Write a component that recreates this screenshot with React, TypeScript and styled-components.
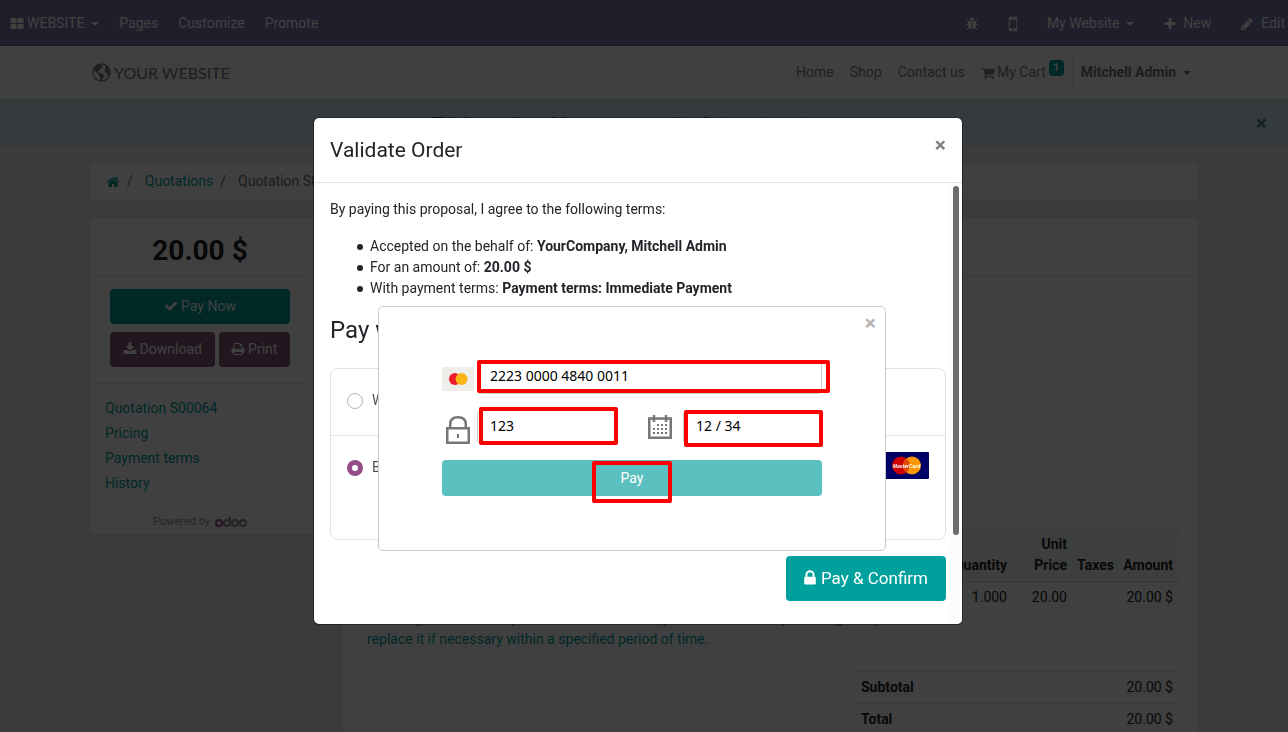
import React from "react";
import styled, { createGlobalStyle } from "styled-components";

const GlobalStyle = createGlobalStyle`
  *, *::before, *::after { box-sizing: border-box; }
  body {
    margin: 0;
    overflow: hidden;
    background: #ebebeb;
    color: #212529;
    font-family: Roboto, "Liberation Sans", sans-serif;
    font-size: 14px;
    line-height: 21px;
  }
  a { color: #00a09d; text-decoration: none; }
  h1, h2, h3, p { margin: 0; }
  button, input { font-family: inherit; }
`;

const paths = {
  apps: "M832 1024v384q0 52-38 90t-90 38h-512q-52 0-90-38t-38-90v-384q0-52 38-90t90-38h512q52 0 90 38t38 90zm0-768v384q0 52-38 90t-90 38h-512q-52 0-90-38t-38-90v-384q0-52 38-90t90-38h512q52 0 90 38t38 90zm896 768v384q0 52-38 90t-90 38h-512q-52 0-90-38t-38-90v-384q0-52 38-90t90-38h512q52 0 90 38t38 90zm0-768v384q0 52-38 90t-90 38h-512q-52 0-90-38t-38-90v-384q0-52 38-90t90-38h512q52 0 90 38t38 90z",
  bug: "M1696 960q0 26-19 45t-45 19h-224q0 171-67 290l208 209q19 19 19 45t-19 45q-18 19-45 19t-45-19l-198-197q-5 5-15 13t-42 28.5-65 36.5-82 29-97 13v-896h-128v896q-51 0-101.5-13.5t-87-33-66-39-43.5-32.5l-15-14-183 207q-20 21-48 21-24 0-43-16-19-18-20.5-44.5t15.5-46.5l202-227q-58-114-58-274h-224q-26 0-45-19t-19-45 19-45 45-19h224v-294l-173-173q-19-19-19-45t19-45 45-19 45 19l173 173h844l173-173q19-19 45-19t45 19 19 45-19 45l-173 173v294h224q26 0 45 19t19 45zm-480-576h-640q0-133 93.5-226.5t226.5-93.5 226.5 93.5 93.5 226.5z",
  mobile: "M976 1408q0-33-23.5-56.5t-56.5-23.5-56.5 23.5-23.5 56.5 23.5 56.5 56.5 23.5 56.5-23.5 23.5-56.5zm208-160v-704q0-13-9.5-22.5t-22.5-9.5h-512q-13 0-22.5 9.5t-9.5 22.5v704q0 13 9.5 22.5t22.5 9.5h512q13 0 22.5-9.5t9.5-22.5zm-192-848q0-16-16-16h-160q-16 0-16 16t16 16h160q16 0 16-16zm288-16v1024q0 52-38 90t-90 38h-512q-52 0-90-38t-38-90v-1024q0-52 38-90t90-38h512q52 0 90 38t38 90z",
  plus: "M1600 736v192q0 40-28 68t-68 28h-416v416q0 40-28 68t-68 28h-192q-40 0-68-28t-28-68v-416h-416q-40 0-68-28t-28-68v-192q0-40 28-68t68-28h416v-416q0-40 28-68t68-28h192q40 0 68 28t28 68v416h416q40 0 68 28t28 68z",
  pencil: "M491 1536l91-91-235-235-91 91v107h128v128h107zm523-928q0-22-22-22-10 0-17 7l-542 542q-7 7-7 17 0 22 22 22 10 0 17-7l542-542q7-7 7-17zm-54-192l416 416-832 832h-416v-416zm683 96q0 53-37 90l-166 166-416-416 166-165q36-38 90-38 53 0 91 38l235 234q37 39 37 91z",
  home: "M1472 992v480q0 26-19 45t-45 19h-384v-384h-256v384h-384q-26 0-45-19t-19-45v-480q0-1 .5-3t.5-3l575-474 575 474q1 2 1 6zm223-69l-62 74q-8 9-21 11h-3q-13 0-21-7l-692-577-692 577q-12 8-24 7-13-2-21-11l-62-74q-8-10-7-23.5t11-21.5l719-599q32-26 76-26t76 26l244 204v-195q0-14 9-23t23-9h192q14 0 23 9t9 23v408l219 182q10 8 11 21.5t-7 23.5z",
  lock: "M640 768h512v-192q0-106-75-181t-181-75-181 75-75 181v192zm832 96v576q0 40-28 68t-68 28h-960q-40 0-68-28t-28-68v-576q0-40 28-68t68-28h32v-192q0-184 132-316t316-132 316 132 132 316v192h32q40 0 68 28t28 68z",
  cart: "M704 1536q0 52-38 90t-90 38-90-38-38-90 38-90 90-38 90 38 38 90zm896 0q0 52-38 90t-90 38-90-38-38-90 38-90 90-38 90 38 38 90zm128-1088v512q0 24-16.5 42.5t-40.5 21.5l-1044 122q13 60 13 70 0 16-24 64h920q26 0 45 19t19 45-19 45-45 19h-1024q-26 0-45-19t-19-45q0-11 8-31.5t16-36 21.5-40 15.5-29.5l-177-823h-204q-26 0-45-19t-19-45 19-45 45-19h256q16 0 28.5 6.5t19.5 15.5 13 24.5 8 26 5.5 29.5 4.5 26h1201q26 0 45 19t19 45z",
  check: "M1671 566q0 40-28 68l-724 724-136 136q-28 28-68 28t-68-28l-136-136-362-362q-28-28-28-68t28-68l136-136q28-28 68-28t68 28l294 295 656-657q28-28 68-28t68 28l136 136q28 28 28 68z",
  download: "M1344 1344q0-26-19-45t-45-19-45 19-19 45 19 45 45 19 45-19 19-45zm256 0q0-26-19-45t-45-19-45 19-19 45 19 45 45 19 45-19 19-45zm128-224v320q0 40-28 68t-68 28h-1472q-40 0-68-28t-28-68v-320q0-40 28-68t68-28h465l135 136q58 56 136 56t136-56l136-136h464q40 0 68 28t28 68zm-325-569q17 41-14 70l-448 448q-18 19-45 19t-45-19l-448-448q-31-29-14-70 17-39 59-39h256v-448q0-26 19-45t45-19h256q26 0 45 19t19 45v448h256q42 0 59 39z",
  print: "M448 1536h896v-256h-896v256zm0-640h896v-384h-160q-40 0-68-28t-28-68v-160h-640v640zm1152 64q0-26-19-45t-45-19-45 19-19 45 19 45 45 19 45-19 19-45zm128 0v416q0 13-9.5 22.5t-22.5 9.5h-224v160q0 40-28 68t-68 28h-960q-40 0-68-28t-28-68v-160h-224q-13 0-22.5-9.5t-9.5-22.5v-416q0-79 56.5-135.5t135.5-56.5h64v-544q0-40 28-68t68-28h672q40 0 88 20t76 48l152 152q28 28 48 76t20 88v256h64q79 0 135.5 56.5t56.5 135.5z",
};

function Icon({ name, size = 14, width = size }: { name: keyof typeof paths; size?: number; width?: number }) {
  const inset = ((size - width) / size) * 896;
  return (
    <svg width={width} height={size} viewBox={`${inset} 0 ${1792 - 2 * inset} 1792`} fill="currentColor" aria-hidden="true">
      <path d={paths[name]} />
    </svg>
  );
}

const Caret = styled.span`
  border: 4px solid transparent;
  border-top-color: currentColor;
  border-bottom: 0;
  margin-left: 7px;
`;

/* ---------- top bars ---------- */

const Navbar = styled.nav`
  height: 46px;
  display: flex;
  justify-content: space-between;
  background: #7c7bad;
  border-bottom: 1px solid #5f5e97;
  padding: 2px 3px 0 10px;
`;

const NavGroup = styled.div<{ $gap: number }>`
  display: flex;
  align-items: center;
  gap: ${(p) => p.$gap}px;
`;

const NavLink = styled.a<{ $gap?: number }>`
  display: flex;
  align-items: center;
  color: #fff;
  svg { margin-right: ${(p) => p.$gap ?? 0}px; }
`;

const Container = styled.div`
  max-width: 1140px;
  margin: 0 auto;
  padding: 0 16px;
`;

const SiteHeader = styled.header`
  background: #fff;
`;

const SiteHeaderRow = styled(Container)`
  height: 53px;
  display: flex;
  align-items: center;
  justify-content: space-between;
  padding-right: 15px;
`;

const Logo = styled.a`
  height: 36px;
  padding: 0 2px;
  display: flex;
  align-items: center;
  gap: 3px;
  color: #777;
  font-family: Lato, sans-serif;
  font-size: 16px;
  background: repeating-linear-gradient(135deg, #fff 0 6px, #f4f4f4 6px 7px);
`;

const Menu = styled.div`
  display: flex;
  align-items: center;
`;

const MenuLink = styled.a<{ $strong?: boolean }>`
  display: flex;
  align-items: center;
  padding: 0 8px;
  color: ${(p) => (p.$strong ? "#777" : "#808080")};
  font-weight: ${(p) => (p.$strong ? 700 : 400)};
  svg { margin-right: 2px; }
`;

const Badge = styled.sup`
  align-self: flex-start;
  min-width: 15px;
  height: 16px;
  margin: -2px 0 0 3px;
  border-radius: 4px;
  background: #00a09d;
  color: #fff;
  font-size: 11px;
  line-height: 16px;
  font-weight: 700;
  text-align: center;
`;

const Divider = styled.span`
  width: 1px;
  height: 36px;
  background: #e4e4e4;
`;

const Alert = styled.div`
  height: 47px;
  display: flex;
  align-items: center;
  border: 1px solid #bee5eb;
  background: #d1ecf1;
  color: #0c5460;
  padding: 2px 20px 0;
`;

const AlertText = styled.p`
  flex: 1;
  padding-right: 30px;
  text-align: center;
`;

const Close = styled.button<{ $color: string }>`
  border: 0;
  padding: 0;
  background: none;
  color: ${(p) => p.$color};
  font-size: 21px;
  font-weight: 700;
  line-height: 21px;
`;

/* ---------- order page ---------- */

const Page = styled(Container)`
  padding-top: 17px;
`;

const Panel = styled.section`
  background: #fff;
  border: 1px solid #fafafa;
  border-radius: 4px;
`;

const Breadcrumb = styled(Panel)`
  height: 37px;
  display: flex;
  align-items: center;
  padding: 0 15px;
  color: #6c757d;
  a { display: flex; align-items: center; }
`;

const Slash = styled.span`
  padding: 0 12px 0 7px;
`;

const Columns = styled.div`
  display: flex;
  align-items: flex-start;
  gap: 12px;
  margin-top: 18px;
`;

const Sidebar = styled(Panel)`
  width: 240px;
  flex: none;
  padding-right: 20px;
`;

const Price = styled.h2`
  height: 58px;
  padding-top: 15px;
  border-bottom: 1px solid #dee2e6;
  font-size: 28px;
  line-height: 34px;
  text-align: center;
`;

const Actions = styled.div`
  display: flex;
  flex-wrap: wrap;
  gap: 8px 4px;
  padding: 12px 19px 16px;
  border-bottom: 1px solid #dee2e6;
`;

const Button = styled.button<{ $color: string; $full?: boolean }>`
  height: 35px;
  flex: 1 0 ${(p) => (p.$full ? "100%" : "auto")};
  display: flex;
  align-items: center;
  justify-content: center;
  gap: 3px;
  border: 0;
  border-radius: 4px;
  padding: 0 12px 2px;
  background: ${(p) => p.$color};
  color: #fff;
  font-size: 14px;
`;

const SideLinks = styled.div`
  display: flex;
  flex-direction: column;
  padding: 12px 14px;
  border-bottom: 1px solid #eee;
  a { line-height: 25px; }
`;

const Powered = styled.div`
  height: 24px;
  display: flex;
  align-items: center;
  justify-content: center;
  gap: 5px;
  color: #999;
  font-size: 11px;
`;

const Order = styled(Panel)`
  flex: 1;
  padding: 0 19px;
  min-width: 0;
`;

const OrderHead = styled.div`
  height: 58px;
  margin: 0 -19px;
  border-bottom: 1px solid #dee2e6;
`;

const Lines = styled.table`
  width: 100%;
  margin-top: 251px;
  border-collapse: collapse;
  table-layout: fixed;
  th, td { padding: 5px; text-align: right; vertical-align: top; }
  td { padding: 4px 5px 6px; }
  th { vertical-align: bottom; background: #f4f6f6; border-top: 1px solid #dee2e6; border-bottom: 2px solid #dee2e6; }
  th:first-child, td:first-child { text-align: left; }
`;

const Description = styled.span`
  color: #00a09d;
`;

const Totals = styled.table`
  width: 322px;
  margin: 15px 0 40px auto;
  border-collapse: collapse;
  th, td { height: 32px; padding: 0 5px; border-top: 1px solid #dee2e6; text-align: left; }
  td { text-align: right; }
`;

/* ---------- dialog ---------- */

const Overlay = styled.div`
  position: fixed;
  inset: 0;
  padding: 118px 12px 0 0;
  background: rgba(0, 0, 0, 0.75);
`;

const Dialog = styled.div`
  position: relative;
  max-width: 648px;
  margin: 0 auto;
  border-radius: 5px;
  background: #fff;
  box-shadow: 0 0 0 1px rgba(0, 0, 0, 0.4);
`;

const DialogHead = styled.div`
  height: 65px;
  display: flex;
  align-items: center;
  justify-content: space-between;
  padding: 0 16px;
  border-bottom: 1px solid #dee2e6;
  ${Close} { margin-bottom: 10px; }
`;

const DialogTitle = styled.h1`
  font-size: 21px;
  font-weight: 400;
  line-height: 30px;
`;

const DialogBody = styled.div`
  padding: 16px 16px 23px;
`;

const Terms = styled.ul`
  margin: 16px 0;
  padding-left: 40px;
  list-style: none;
  li { position: relative; }
  li::before {
    content: "";
    position: absolute;
    left: -13px;
    top: 8px;
    width: 6px;
    height: 6px;
    border-radius: 50%;
    background: currentColor;
  }
`;

const PayTitle = styled.h3`
  font-size: 24px;
  line-height: 31px;
  font-weight: 400;
  margin-bottom: 22px;
`;

const Methods = styled.div`
  border: 1px solid #dee2e6;
  border-radius: 8px;
`;

const Method = styled.div<{ $last?: boolean }>`
  min-height: ${(p) => (p.$last ? 103 : 67)}px;
  display: flex;
  align-items: flex-start;
  justify-content: space-between;
  padding: ${(p) => (p.$last ? 16 : 21)}px 16px 0;
  border-bottom: ${(p) => (p.$last ? 0 : 1)}px solid #dee2e6;
  color: #495057;
  label { display: flex; align-items: center; gap: 9px; margin-top: ${(p) => (p.$last ? 5 : 0)}px; }
`;

const Radio = styled.input`
  appearance: none;
  width: 16px;
  height: 16px;
  margin: 0;
  border: 1px solid #adb5bd;
  border-radius: 50%;
  background: #fff;
  &:checked { border: 5px solid #934e8a; }
`;

const DialogFoot = styled.div`
  display: flex;
  justify-content: flex-end;
  margin-top: 16px;
`;

const Confirm = styled.button`
  height: 45px;
  display: flex;
  align-items: center;
  gap: 5px;
  border: 0;
  border-radius: 4px;
  padding: 0 18px 2px;
  background: #00a09d;
  color: #fff;
  font-size: 17px;
`;

const ScrollTrack = styled.span`
  position: absolute;
  top: 65px;
  right: 0;
  bottom: 0;
  width: 12px;
  padding: 3px;
  border-bottom-right-radius: 5px;
  background: #fcfcfc;
`;

const ScrollThumb = styled.span`
  display: block;
  width: 6px;
  height: 349px;
  border-radius: 3px;
  background: #6c6c6c;
`;

/* ---------- card form over the dialog ---------- */

const CardForm = styled.form`
  position: absolute;
  top: 188px;
  left: 64px;
  right: 76px;
  height: 245px;
  padding: 6px 63px 0;
  border: 1px solid #c9c9c9;
  border-radius: 5px;
  background: #fff;
`;

const CloseRow = styled.div`
  height: 47px;
  display: flex;
  justify-content: flex-end;
  align-items: flex-start;
  margin-right: -54px;
`;

const FieldRow = styled.div`
  display: flex;
  align-items: center;
  margin-bottom: 16px;
`;

const IconBox = styled.span<{ $kind?: "card" | "lock" | "date" }>`
  width: 35px;
  height: 34px;
  flex: none;
  display: flex;
  align-items: ${(p) => (p.$kind === "date" ? "center" : "flex-end")};
  padding-left: ${(p) => (p.$kind === "lock" ? 4 : 0)}px;
  padding-bottom: ${(p) => (p.$kind === "card" ? 3 : 0)}px;
  margin-left: ${(p) => (p.$kind === "date" ? "auto" : 0)};
`;

const Field = styled.input<{ $grow?: boolean }>`
  min-width: 0;
  width: ${(p) => (p.$grow ? "auto" : "139px")};
  flex: ${(p) => (p.$grow ? 1 : "none")};
  height: 34px;
  border: 1px solid #ccc;
  border-radius: 4px;
  padding: 0 12px 3px;
  background: #fff;
  color: #000;
  font-family: "Noto Sans", sans-serif;
  font-size: 14px;
`;

const PayButton = styled.button`
  width: 100%;
  height: 36px;
  border: 0;
  border-radius: 4px;
  padding: 0;
  background: #5bc0c0;
  color: #fff;
  font-size: 14px;
`;

const Mark = styled.span<{ $x: number; $y: number; $w: number; $h: number }>`
  position: absolute;
  left: ${(p) => p.$x}px;
  top: ${(p) => p.$y}px;
  width: ${(p) => p.$w}px;
  height: ${(p) => p.$h}px;
  border: 4px solid #f00;
  border-radius: 2px;
  pointer-events: none;
`;

const GlobeLogo = () => (
  <svg width="19" height="19" viewBox="0 0 19 19" aria-hidden="true">
    <circle cx="9.5" cy="9.500" r="8.500" fill="none" stroke="currentColor" strokeWidth="1.300" />
    <path
      fill="currentColor"
      d="M2 5.500L4 3L7 1.200L10 1.500L9.500 3L11 3.500L10 5L8.500 5.500L8 7L6.500 7.500L6 9L7.500 10L9 10L11.500 11.500L13 12.500L11.500 14.500L10.500 16L9.500 18L8 17.500L8 14.500L6.500 12.500L6.500 11L4.500 9.500L2.500 8Z"
    />
    <path fill="currentColor" d="M13 2.500L16 4.500L17.500 7.500L17.500 11L16 13.500L15 12L15 10L13 9L12.500 6.500L14 5Z" />
  </svg>
);

const OdooLogo = () => (
  <svg width="32" height="11" viewBox="0 0 32 11" fill="none" strokeWidth="2" role="img" aria-label="odoo">
    <circle cx="4" cy="7" r="3" stroke="#a24689" />
    <circle cx="12" cy="7" r="3" stroke="#8f8f8f" />
    <path d="M15 0.500V7" stroke="#8f8f8f" />
    <circle cx="20" cy="7" r="3" stroke="#8f8f8f" />
    <circle cx="28" cy="7" r="3" stroke="#8f8f8f" />
  </svg>
);

const ArrowIcon = () => (
  <svg width="9" height="11" viewBox="0 0 9 11" fill="none" stroke="currentColor" strokeWidth="2" aria-hidden="true">
    <path d="M0 6H8M4.500 2L8 6L4.500 10" />
  </svg>
);

const MastercardLogo = () => (
  <svg width="45" height="27" viewBox="0 0 45 27" role="img" aria-label="MasterCard">
    <rect width="45" height="27" rx="1" fill="#006" />
    <circle cx="17" cy="13.500" r="9" fill="#c00" />
    <circle cx="28" cy="13.500" r="9" fill="#f90" />
    <path d="M22.500 6.500A9 9 0 0 1 22.500 20.500A9 9 0 0 1 22.500 6.500" fill="#e04a00" />
    <text x="22.500" y="16" textAnchor="middle" fill="#fff" fontFamily="Liberation Sans, sans-serif" fontSize="5" fontWeight="700" fontStyle="italic">MasterCard</text>
  </svg>
);

const CardThumb = () => (
  <svg width="32" height="24" viewBox="0 0 32 24" aria-hidden="true">
    <rect width="32" height="24" rx="2" fill="#efedea" />
    <circle cx="13" cy="12" r="6" fill="#ed1c2e" />
    <circle cx="19.500" cy="12" r="6" fill="#fcb316" />
  </svg>
);

const PadlockIcon = () => (
  <svg width="24" height="28" viewBox="0 0 24 28" fill="none" stroke="#777" strokeWidth="3" aria-hidden="true">
    <path d="M1.250 12.250H22.750V26.750H1.250Z" strokeWidth="2.500" />
    <path d="M4.250 12V8Q4.250 1.250 12 1.250T19.750 8V12" strokeWidth="2.500" />
    <path d="M12 18V22" strokeWidth="2" />
  </svg>
);

const CalendarIcon = () => (
  <svg width="24" height="24" viewBox="0 0 24 24" fill="none" stroke="#777" aria-hidden="true">
    <path d="M1.250 3.500H22.750V22.750H1.250Z" strokeWidth="2.500" />
    <path d="M6 0V7M18 0V7" strokeWidth="2.500" />
    <path d="M9 10H20M5 14H20M5 18H20" strokeWidth="2" strokeDasharray="2 2" />
  </svg>
);

export default function App() {
  return (
    <>
      <GlobalStyle />
      <Navbar>
        <NavGroup $gap={20}>
          <NavLink href="#" $gap={3}><Icon name="apps" />WEBSITE<Caret /></NavLink>
          <NavLink href="#">Pages</NavLink>
          <NavLink href="#">Customize</NavLink>
          <NavLink href="#">Promote</NavLink>
        </NavGroup>
        <NavGroup $gap={29}>
          <NavLink href="#" aria-label="Debug"><Icon name="bug" /></NavLink>
          <NavLink href="#" aria-label="Mobile preview"><Icon name="mobile" size={20} width={10} /></NavLink>
          <NavLink href="#">My Website<Caret /></NavLink>
          <NavLink href="#" $gap={6}><Icon name="plus" />New</NavLink>
          <NavLink href="#" $gap={7}><Icon name="pencil" />Edit</NavLink>
        </NavGroup>
      </Navbar>

      <SiteHeader>
        <SiteHeaderRow>
          <Logo href="#"><GlobeLogo />YOUR WEBSITE</Logo>
          <Menu>
            <MenuLink href="#">Home</MenuLink>
            <MenuLink href="#">Shop</MenuLink>
            <MenuLink href="#">Contact us</MenuLink>
            <MenuLink href="#"><Icon name="cart" />My Cart<Badge>1</Badge></MenuLink>
            <Divider />
            <MenuLink href="#" $strong>Mitchell Admin<Caret /></MenuLink>
          </Menu>
        </SiteHeaderRow>
      </SiteHeader>

      <Alert>
        <AlertText><b>This is a preview of the customer portal.</b> <a href="#"><ArrowIcon /> Back to edit mode</a></AlertText>
        <Close $color="#4f7f88" aria-label="Dismiss">×</Close>
      </Alert>

      <Page as="main">
        <Breadcrumb>
          <a href="#" aria-label="Home"><Icon name="home" /></a>
          <Slash>/</Slash>
          <a href="#">Quotations</a>
          <Slash>/</Slash>
          <span>Quotation S00064</span>
        </Breadcrumb>
        <Columns>
          <Sidebar>
            <Price>20.00 $</Price>
            <Actions>
              <Button $color="#00a09d" $full><Icon name="check" />Pay Now</Button>
              <Button $color="#875a7b"><Icon name="download" />Download</Button>
              <Button $color="#875a7b"><Icon name="print" />Print</Button>
            </Actions>
            <SideLinks>
              <a href="#">Quotation S00064</a>
              <a href="#">Pricing</a>
              <a href="#">Payment terms</a>
              <a href="#">History</a>
            </SideLinks>
            <Powered>Powered by <OdooLogo /></Powered>
          </Sidebar>
          <Order>
            <OrderHead />
            <Lines>
              <colgroup>
                <col />
                <col style={{ width: 67 }} />
                <col style={{ width: 60 }} />
                <col style={{ width: 46 }} />
                <col style={{ width: 60 }} />
              </colgroup>
              <thead>
                <tr><th>Products</th><th>Quantity</th><th>Unit Price</th><th>Taxes</th><th>Amount</th></tr>
              </thead>
              <tbody>
                <tr>
                  <td>
                    Warranty<br />
                    <Description>Warranty, issued to the purchaser of an article by its manufacturer, promising to repair or replace it if necessary within a specified period of time.</Description>
                  </td>
                  <td>1.000</td><td>20.00</td><td /><td>20.00 $</td>
                </tr>
              </tbody>
            </Lines>
            <Totals>
              <tbody>
                <tr><th>Subtotal</th><td>20.00 $</td></tr>
                <tr><th>Total</th><td>20.00 $</td></tr>
              </tbody>
            </Totals>
          </Order>
        </Columns>
      </Page>

      <Overlay>
        <Dialog role="dialog" aria-labelledby="dialog-title">
          <ScrollTrack><ScrollThumb /></ScrollTrack>
          <DialogHead>
            <DialogTitle id="dialog-title">Validate Order</DialogTitle>
            <Close $color="#7f7f7f" aria-label="Close">×</Close>
          </DialogHead>
          <DialogBody>
            <p>By paying this proposal, I agree to the following terms:</p>
            <Terms>
              <li>Accepted on the behalf of: <b>YourCompany, Mitchell Admin</b></li>
              <li>For an amount of: <b>20.00 $</b></li>
              <li>With payment terms: <b>Payment terms: Immediate Payment</b></li>
            </Terms>
            <PayTitle>Pay with</PayTitle>
            <Methods>
              <Method>
                <label><Radio type="radio" name="method" />Wire Transfer</label>
              </Method>
              <Method $last>
                <label><Radio type="radio" name="method" defaultChecked />Buckaroo</label>
                <MastercardLogo />
              </Method>
            </Methods>
            <DialogFoot>
              <Confirm><Icon name="lock" size={18} width={12} />Pay &amp; Confirm</Confirm>
            </DialogFoot>
          </DialogBody>

          <CardForm onSubmit={(e) => e.preventDefault()}>
            <CloseRow><Close type="button" $color="#b5b5b5" aria-label="Close card form">×</Close></CloseRow>
            <FieldRow>
              <IconBox $kind="card"><CardThumb /></IconBox>
              <Field $grow aria-label="Card number" defaultValue="2223 0000 4840 0011" />
            </FieldRow>
            <FieldRow>
              <IconBox $kind="lock"><PadlockIcon /></IconBox>
              <Field aria-label="Security code" defaultValue="123" />
              <IconBox $kind="date"><CalendarIcon /></IconBox>
              <Field aria-label="Expiry date" defaultValue="12 / 34" />
            </FieldRow>
            <PayButton>Pay</PayButton>
            <Mark $x={98} $y={53} $w={353} $h={33} />
            <Mark $x={100} $y={100} $w={139} $h={38} />
            <Mark $x={305} $y={103} $w={139} $h={37} />
            <Mark $x={213} $y={154} $w={80} $h={42} />
          </CardForm>
        </Dialog>
      </Overlay>
    </>
  );
}
